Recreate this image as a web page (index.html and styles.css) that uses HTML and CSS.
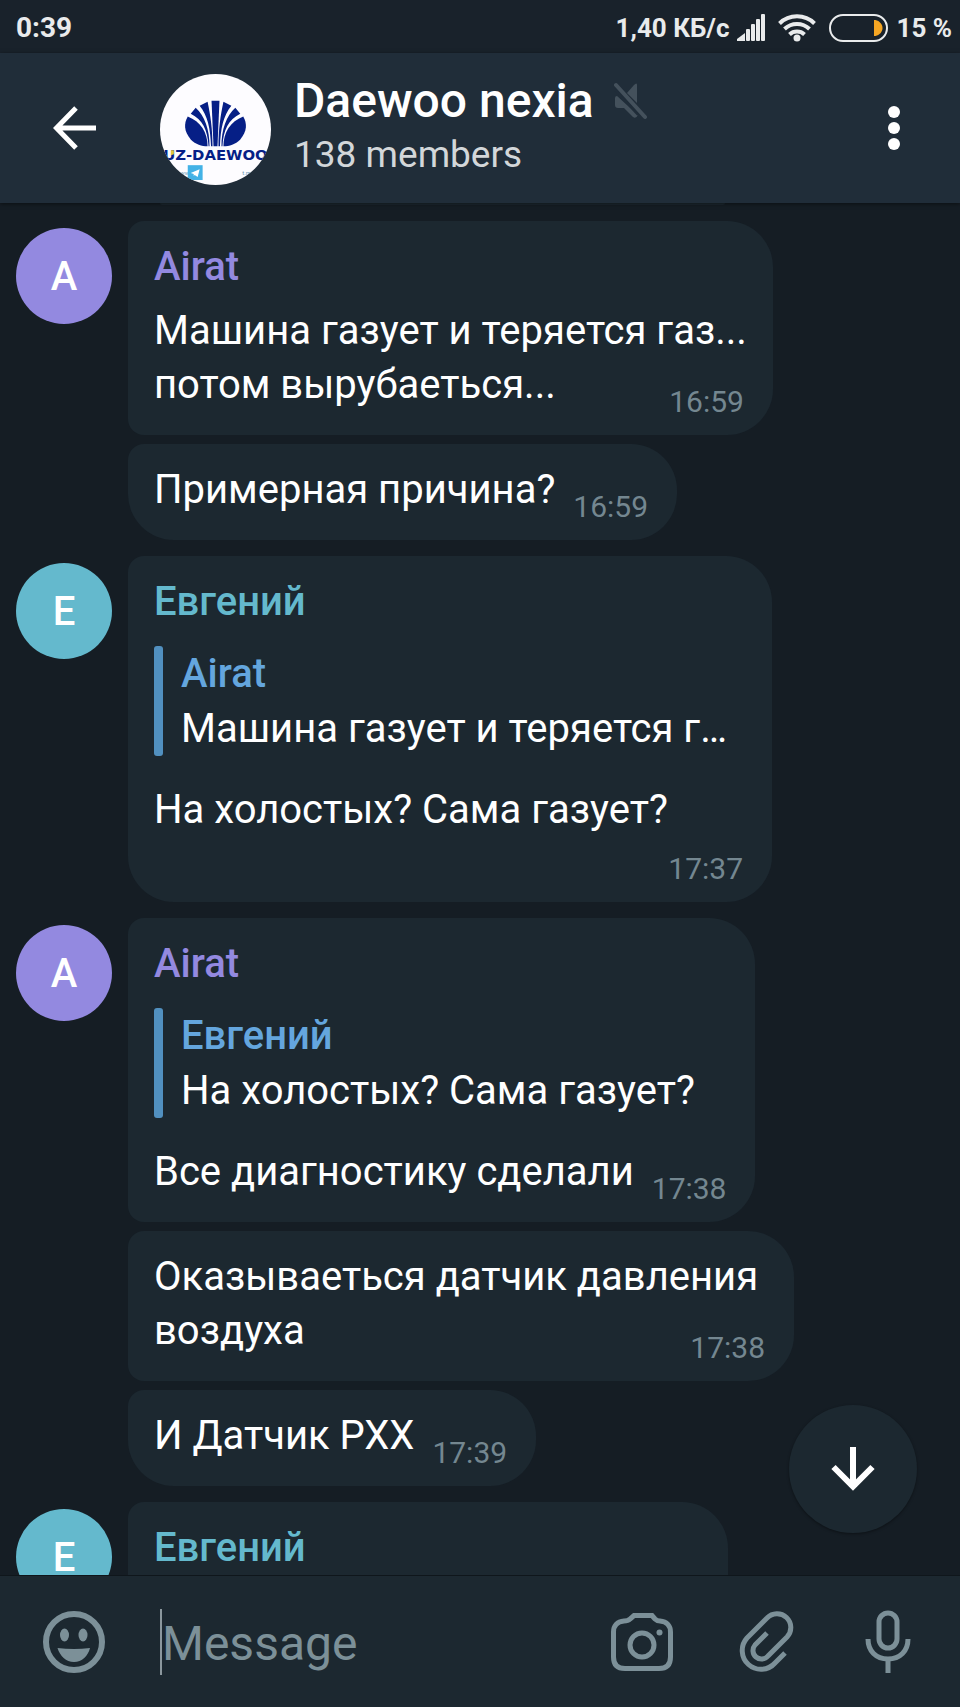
FILE: index.html
```html
<!DOCTYPE html>
<html lang="ru">
<head>
    <meta charset="UTF-8">
    <meta name="viewport" content="width=device-width, initial-scale=1.0">
    <title>Daewoo nexia</title>
    <link rel="stylesheet" href="styles.css">
</head>
<body>
    <div class="status-bar">
        <span>0:39</span>
        <div class="status-right">
            <span>1,40 КБ/с</span>
            <svg class="signal" width="28" height="28" viewBox="0 0 28 28" fill="#e9ebec">
                <path d="M0 27v-2l8-6v8z"/>
                <rect x="9" y="15" width="4" height="12" rx="1"/>
                <rect x="14" y="10" width="4" height="17" rx="1"/>
                <rect x="19" y="5" width="4" height="22" rx="1"/>
                <rect x="24" y="0" width="4" height="27" rx="1"/>
            </svg>
            <svg class="wifi" width="38" height="28" viewBox="0 0 38 28" fill="none" stroke="#e9ebec" stroke-width="4">
                <path d="M1.500 9.500a25 25 0 0 1 35 0"/>
                <path d="M6.500 15a18 18 0 0 1 25 0"/>
                <path d="M11.500 20.500a11 11 0 0 1 15 0"/>
                <circle cx="19" cy="24" r="3.500" fill="#e9ebec" stroke="none"/>
            </svg>
            <svg class="battery" width="59" height="28" viewBox="0 0 59 28">
                <rect x="1" y="1" width="57" height="26" rx="13" fill="none" stroke="#e9ebec" stroke-width="2"/>
                <path d="M45 6h1.500c4 1 7 4 7 8s-3 7-7 8H45z" fill="#f5a623"/>
            </svg>
            <span>15 %</span>
        </div>
    </div>

    <header class="header">
        <button class="icon-button back" aria-label="Back">
            <svg width="44" height="44" viewBox="0 0 44 44" fill="none" stroke="#fff" stroke-width="5">
                <path d="M43 22H4M23 2L3.500 22L23 42"/>
            </svg>
        </button>
        <svg class="group-photo" width="111" height="111" viewBox="0 0 112 112">
            <rect width="112" height="112" fill="#fdfcff"/>
            <g fill="#061f86">
                <path d="M28 43C24 50 24 58 31 66C36 71 42 73 48 73C48 59 41 48 28 43z"/>
                <path d="M84 43C88 50 88 58 81 66C76 71 70 73 64 73C64 59 71 48 84 43z"/>
                <path d="M31 40L36 34C45 42 50 56 50 73H49C48 56 43 46 31 40z"/>
                <path d="M81 40L76 34C67 42 62 56 62 73H63C64 56 69 46 81 40z"/>
                <path d="M40 32L48 28C51 42 53 56 53 73H51.500C51 55 48 42 40 32z"/>
                <path d="M72 32L64 28C61 42 59 56 59 73H60.500C61 55 64 42 72 32z"/>
                <path d="M52 27H60L58 73H54z"/>
                <text class="logo-text" x="56" y="87" text-anchor="middle">UZ-DAEWOO</text>
            </g>
            <path d="M11 77h3v4l-3 1z" fill="#e3c63c"/>
            <text class="logo-small" x="16" y="102">www</text>
            <text class="logo-small" x="83" y="102">t.me</text>
            <rect x="28" y="92" width="15" height="15" fill="#43b2e6"/>
            <path d="M31 100l9-4l-2 8l-3-2l-1 1v-2z" fill="#fff"/>
        </svg>
        <div class="header-info">
            <h1 class="title">Daewoo nexia
                <svg class="muted" width="34" height="38" viewBox="0 0 34 38" fill="#44515c">
                    <path d="M23 3V21L13 11L20 3Q23 0 23 3z"/>
                    <path d="M3 14L24 33Q22 37 19 35L10 26H4Q1 26 1 23V16Q1 14 3 14z"/>
                    <path d="M2 3L31 35" stroke="#44515c" stroke-width="4" stroke-linecap="round"/>
                    <path d="M0 7L24 33" stroke="#202d39" stroke-width="2"/>
                </svg>
            </h1>
            <p class="subtitle">138 members</p>
        </div>
        <button class="icon-button menu" aria-label="Menu">
            <svg width="12" height="44" viewBox="0 0 12 44" fill="#fff">
                <circle cx="6" cy="6" r="6"/>
                <circle cx="6" cy="22" r="6"/>
                <circle cx="6" cy="38" r="6"/>
            </svg>
        </button>
    </header>

    <main class="chat">
        <div class="previous"></div>

        <section class="group">
            <div class="avatar purple">A</div>
            <div class="messages">
                <article class="bubble">
                    <h2 class="name purple-text">Airat</h2>
                    <p class="text">Машина газует и теряется газ...<br>потом вырубаеться...<time class="time">16:59</time></p>
                </article>
                <article class="bubble">
                    <p class="text">Примерная причина?<time class="time">16:59</time></p>
                </article>
            </div>
        </section>

        <section class="group">
            <div class="avatar cyan">E</div>
            <div class="messages">
                <article class="bubble medium">
                    <h2 class="name cyan-text">Евгений</h2>
                    <blockquote class="reply">
                        <div class="reply-name">Airat</div>
                        <div class="reply-text">Машина газует и теряется г…</div>
                    </blockquote>
                    <p class="text">На холостых? Сама газует?<time class="time below">17:37</time></p>
                </article>
            </div>
        </section>

        <section class="group">
            <div class="avatar purple">A</div>
            <div class="messages">
                <article class="bubble">
                    <h2 class="name purple-text">Airat</h2>
                    <blockquote class="reply">
                        <div class="reply-name">Евгений</div>
                        <div class="reply-text">На холостых? Сама газует?</div>
                    </blockquote>
                    <p class="text">Все диагностику сделали<time class="time">17:38</time></p>
                </article>
                <article class="bubble wide">
                    <p class="text">Оказываеться датчик давления<br>воздуха<time class="time">17:38</time></p>
                </article>
                <article class="bubble">
                    <p class="text">И Датчик РХХ<time class="time">17:39</time></p>
                </article>
            </div>
        </section>

        <section class="group">
            <div class="avatar cyan">E</div>
            <div class="messages">
                <article class="bubble narrow">
                    <h2 class="name cyan-text">Евгений</h2>
                </article>
            </div>
        </section>

        <button class="scroll-down" aria-label="Scroll down">
            <svg width="44" height="44" viewBox="0 0 44 44" fill="none" stroke="#fff" stroke-width="6">
                <path d="M22 0V39M2.500 20L22 39.500L41.500 20"/>
            </svg>
        </button>
    </main>

    <form class="composer">
        <button type="button" class="icon-button" aria-label="Emoji">
            <svg width="64" height="64" viewBox="0 0 64 64" fill="#7c9098">
                <circle cx="32" cy="32" r="28" fill="none" stroke="#7c9098" stroke-width="6"/>
                <ellipse cx="22.500" cy="25" rx="4.500" ry="6.500"/>
                <ellipse cx="41" cy="25" rx="4.500" ry="6.500"/>
                <path d="M15.500 38Q32 40 48 38C46 46 40 52 32 52S18 46 15.500 38z"/>
            </svg>
        </button>
        <input type="text" class="message-input" placeholder="Message" aria-label="Message">
        <button type="button" class="icon-button" aria-label="Camera">
            <svg width="64" height="64" viewBox="0 0 64 64" fill="none" stroke="#7c9098" stroke-width="5">
                <path d="M24 5.500H42L45 9Q47 11 50 11C57 11.500 60.500 16 60.500 22V47Q60.500 58.500 49 58.500H15Q3.500 58.500 3.500 47V22C3.500 16 7 11.500 14 11Q18 11 20 9z"/>
                <circle cx="32" cy="35" r="12"/>
                <circle cx="49.500" cy="22.500" r="3" fill="#7c9098" stroke="none"/>
            </svg>
        </button>
        <button type="button" class="icon-button" aria-label="Attach">
            <svg width="64" height="64" viewBox="0 0 64 64" fill="none" stroke="#7c9098" stroke-width="5">
                <path d="M52 43L42 53A18 18 0 0 1 14 28L34 8A13.300 13.300 0 0 1 54 27L35 46A8 8 0 0 1 22 35L34 23"/>
            </svg>
        </button>
        <button type="button" class="icon-button" aria-label="Voice message">
            <svg width="64" height="64" viewBox="0 0 64 64" fill="none" stroke="#7c9098" stroke-width="5">
                <rect x="23" y="3" width="18" height="35" rx="9"/>
                <path d="M12 29C12 41 20 49 32 49S52 41 52 29M32 49V63"/>
            </svg>
        </button>
    </form>
</body>
</html>
```
FILE: styles.css
```css
* {
    box-sizing: border-box;
}

body {
    display: flex;
    flex-direction: column;
    height: 100vh;
    margin: 0;
    font-family: Roboto, "Liberation Sans", sans-serif;
    font-size: 40px;
    line-height: 54px;
    background-color: #151d24;
    color: #fff;
}

h1, h2, p, blockquote {
    margin: 0;
}

svg {
    display: block;
    flex-shrink: 0;
}

/* Status bar */
.status-bar {
    display: flex;
    justify-content: space-between;
    align-items: center;
    height: 53px;
    padding: 2px 8px 0 16px;
    background-color: #19222b;
    color: #e9ebec;
    font-size: 28px;
    font-weight: 700;
    line-height: 50px;
}

.status-right {
    display: flex;
    align-items: center;
    gap: 8px;
    font-size: 26px;
}

.wifi {
    margin: 0 5px;
}

/* Header */
.header {
    display: flex;
    align-items: center;
    height: 150px;
    padding: 0 24px 0 33px;
    background-color: #202d39;
    box-shadow: 0 1px 4px rgba(0, 0, 0, 0.5);
    z-index: 1;
}

.icon-button {
    display: flex;
    justify-content: center;
    align-items: center;
    padding: 0;
    border: none;
    background: none;
    cursor: pointer;
}

.back {
    width: 84px;
    height: 84px;
}

.menu {
    width: 84px;
    height: 84px;
}

.group-photo {
    margin: 2px 0 0 43px;
    border-radius: 50%;
}

.logo-text {
    font-family: "DejaVu Sans", sans-serif;
    font-size: 15px;
    font-weight: 700;
}

.logo-small {
    font-size: 6px;
    fill: #6f9bb5;
}

.header-info {
    flex: 1;
    padding-left: 23px;
}

.title {
    display: flex;
    align-items: center;
    gap: 20px;
    font-size: 48px;
    font-weight: 500;
    line-height: 54px;
}

.subtitle {
    font-size: 37px;
    line-height: 54px;
    color: #d3d7da;
}

/* Chat */
.chat {
    position: relative;
    flex: 1;
    min-height: 0;
    overflow: hidden;
}

.previous {
    width: 565px;
    height: 2px;
    margin: 0 0 16px 160px;
    border-radius: 0 0 2px 2px;
    background-color: #1c2830;
}

.group {
    display: flex;
    align-items: flex-start;
    gap: 16px;
    margin-bottom: 16px;
    padding: 0 16px;
}

.avatar {
    flex-shrink: 0;
    width: 96px;
    height: 96px;
    margin-top: 7px;
    border-radius: 50%;
    font-weight: 500;
    line-height: 98px;
    text-align: center;
}

.purple {
    background-color: #9389e0;
}

.cyan {
    background-color: #64b9cd;
}

.messages {
    display: flex;
    flex-direction: column;
    align-items: flex-start;
    gap: 9px;
}

.bubble {
    padding: 19px 26px 23px 26px;
    border-radius: 16px 46px 46px 16px;
    background-color: #1c2830;
}

.bubble:last-child {
    border-bottom-left-radius: 46px;
}

.bubble.medium {
    width: 644px;
}

.bubble.wide {
    width: 666px;
}

.bubble.narrow {
    width: 600px;
    min-height: 160px;
}

.name {
    font-size: 40px;
    font-weight: 500;
    line-height: 54px;
}

.purple-text {
    color: #9389e0;
}

.cyan-text {
    color: #64b9cd;
}

.name + .text {
    margin-top: 10px;
}

.reply {
    position: relative;
    margin: 17px 0 27px;
    padding-left: 27px;
}

.reply::before {
    content: "";
    position: absolute;
    top: 0;
    left: 0;
    width: 9px;
    height: 100%;
    border-radius: 3px;
    background-color: #5190bf;
}

.reply-name {
    font-weight: 500;
    line-height: 56px;
    color: #64a6de;
}

.reply-text {
    line-height: 54px;
    white-space: nowrap;
}

.time {
    float: right;
    margin: 29px 3px -5px 18px;
    font-size: 30px;
    line-height: 30px;
    color: #748790;
}

.time.below {
    margin-top: 17px;
}

.scroll-down {
    position: absolute;
    right: 43px;
    bottom: 42px;
    display: flex;
    justify-content: center;
    align-items: center;
    width: 128px;
    height: 128px;
    border: none;
    border-radius: 50%;
    background-color: #1c2830;
    box-shadow: 0 1px 3px rgba(0, 0, 0, 0.4);
    cursor: pointer;
}

/* Message input */
.composer {
    display: flex;
    align-items: center;
    gap: 59px;
    height: 132px;
    padding: 0 40px 0 42px;
    border-top: 1px solid #0f161b;
    background-color: #1c2830;
}

.message-input {
    flex: 1;
    min-width: 0;
    height: 66px;
    margin-left: -5px;
    padding: 4px 0 0;
    border: none;
    border-left: 2px solid #8b979d;
    outline: none;
    background: none;
    color: #fff;
    font-family: inherit;
    font-size: 48px;
}

.message-input::placeholder {
    color: #7c9098;
    opacity: 1;
}
```
